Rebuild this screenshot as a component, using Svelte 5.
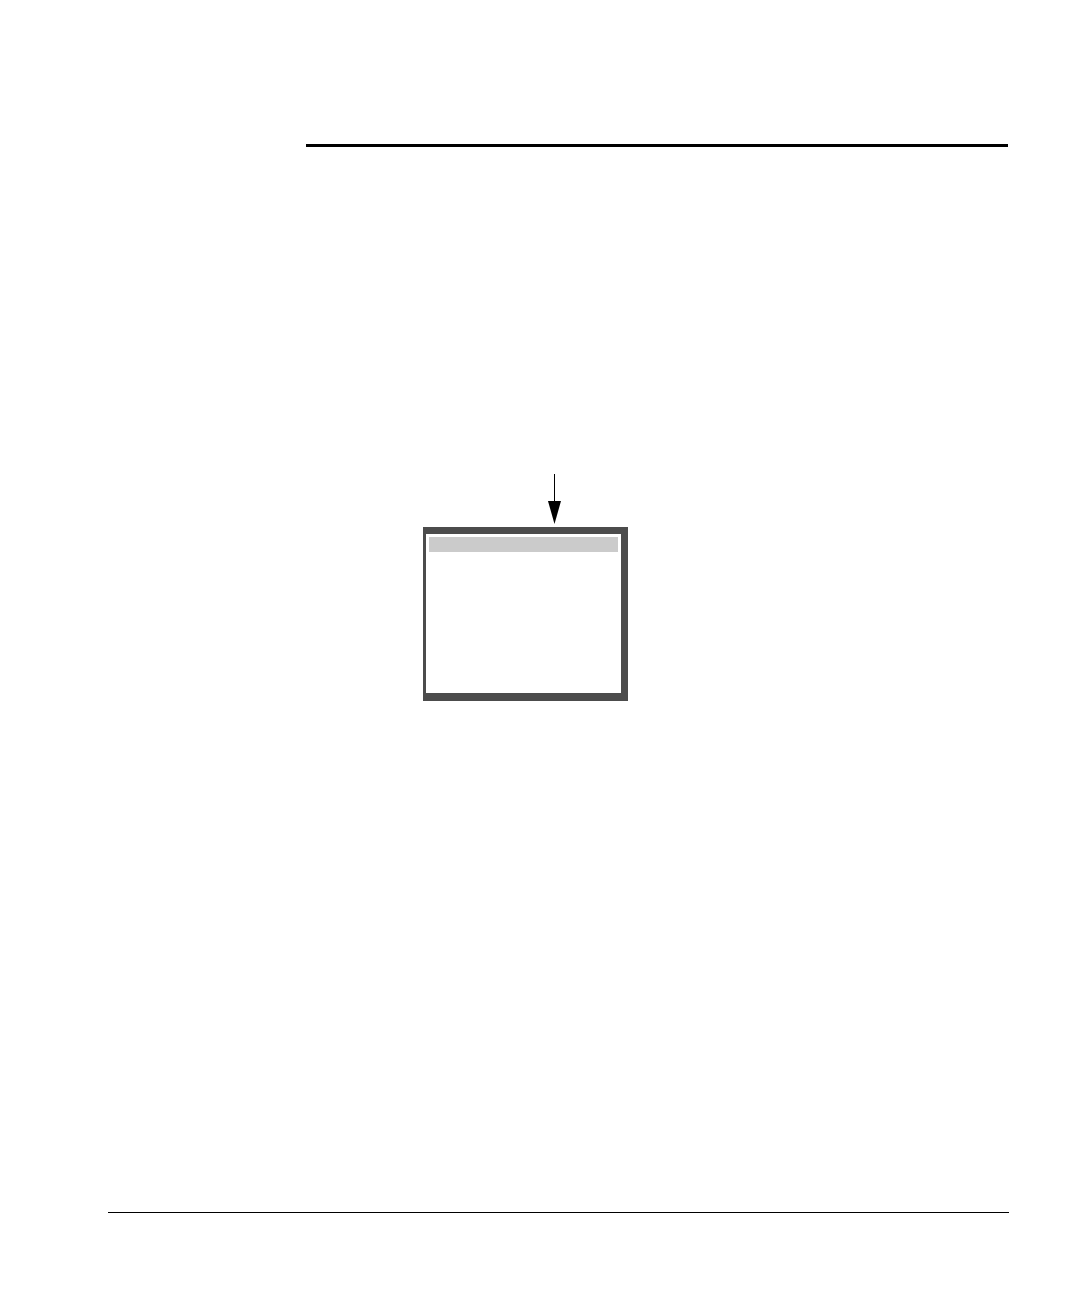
<script>
  let { arrowHeight = 50 } = $props();

  const headHeight = 23;
  let neck = $derived(arrowHeight - headHeight);
</script>

<div class="page">
  <header>
    <hr class="rule-thick" />
  </header>

  <main>
    <figure>
      <svg class="arrow" width="13" height={arrowHeight} viewBox="0 0 13 {arrowHeight}" aria-hidden="true">
        <rect x="6" y="0" width="1" height={neck + 1} />
        <polygon points="0,{neck} 13,{neck} 6.5,{arrowHeight}" />
      </svg>
      <div class="window">
        <div class="title-bar"></div>
      </div>
    </figure>
  </main>

  <footer>
    <hr class="rule-thin" />
  </footer>
</div>

<style>
  :global(body) { margin: 0; background: #fff; }
  .page {
    display: flex;
    flex-direction: column;
    box-sizing: border-box;
    min-height: 100vh;
    padding: 144px 71px 83px 108px;
  }
  header { padding: 0 1px 0 198px; }
  hr { margin: 0; border: 0; background: #000; }
  .rule-thick { height: 3px; }
  .rule-thin { height: 1px; }
  main { flex: 1; padding: 327px 0 0 315px; }
  figure {
    display: flex;
    flex-direction: column;
    gap: 3px;
    width: 205px;
    margin: 0;
  }
  .arrow { display: block; margin-left: 125px; fill: #000; }
  .window {
    box-sizing: border-box;
    height: 174px;
    padding: 3px;
    border: solid #4c4c4c;
    border-width: 7px 7px 8px 3px;
    background: #fff;
  }
  .title-bar { height: 15px; background: #cbcbcb; }
</style>
